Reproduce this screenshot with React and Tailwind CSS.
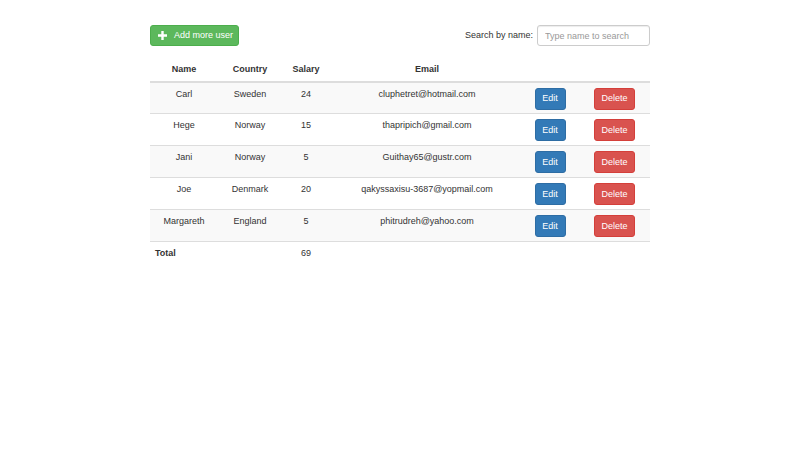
import React from 'react';

const users = [
  { name: 'Carl', country: 'Sweden', salary: 24, email: 'cluphetret@hotmail.com' },
  { name: 'Hege', country: 'Norway', salary: 15, email: 'thapripich@gmail.com' },
  { name: 'Jani', country: 'Norway', salary: 5, email: 'Guithay65@gustr.com' },
  { name: 'Joe', country: 'Denmark', salary: 20, email: 'qakyssaxisu-3687@yopmail.com' },
  { name: 'Margareth', country: 'England', salary: 5, email: 'phitrudreh@yahoo.com' },
];

const App = () => {
  const total = users.reduce((s, u) => s + u.salary, 0);

  return (
    <div className="min-h-screen bg-white text-[#333] text-[9px] leading-[12.5px]" style={{ fontFamily: '"Liberation Sans", Arial, sans-serif' }}>
      <div className="w-[500px] ml-[150px] pt-[25px]">
        {/* Toolbar */}
        <div className="flex items-center justify-between">
          <button className="h-[21px] w-[89px] flex items-center bg-[#5cb85c] border border-[#4cae4c] rounded-[3px] text-white pl-[7px]">
            <svg width="9" height="9" viewBox="0 0 9 9" className="mr-[7px]">
              <path d="M3.3 0h2.4v3.3H9v2.4H5.7V9H3.3V5.7H0V3.3h3.3z" fill="white" />
            </svg>
            <span>Add more user</span>
          </button>
          <div className="flex items-center">
            <span className="mr-[4px]">Search by name:</span>
            <input
              placeholder="Type name to search"
              className="h-[21px] w-[113px] border border-[#ccc] rounded-[3px] px-[7px] text-[9px] placeholder:text-[#999] outline-none shadow-[inset_0_1px_1px_rgba(0,0,0,0.075)]"
            />
          </div>
        </div>

        {/* Table */}
        <table className="w-full table-fixed border-collapse mt-[12px]">
          <colgroup>
            <col className="w-[68px]" />
            <col className="w-[64px]" />
            <col className="w-[48px]" />
            <col className="w-[194px]" />
            <col className="w-[52px]" />
            <col className="w-[74px]" />
          </colgroup>
          <thead>
            <tr className="border-b-2 border-[#ddd]">
              <th className="font-bold text-center px-[5px] pt-[5px] pb-[5px]">Name</th>
              <th className="font-bold text-center px-[5px] pt-[5px] pb-[5px]">Country</th>
              <th className="font-bold text-center px-[5px] pt-[5px] pb-[5px]">Salary</th>
              <th className="font-bold text-center px-[5px] pt-[5px] pb-[5px]">Email</th>
              <th></th>
              <th></th>
            </tr>
          </thead>
          <tbody>
            {users.map((u, i) => (
              <tr key={u.name} className={`border-t border-[#ddd] h-[32px] ${i % 2 === 0 ? 'bg-[#f9f9f9]' : 'bg-white'}`}>
                <td className="text-center align-top px-[5px] pt-[5px]">{u.name}</td>
                <td className="text-center align-top px-[5px] pt-[5px]">{u.country}</td>
                <td className="text-center align-top px-[5px] pt-[5px]">{u.salary}</td>
                <td className="text-center align-top px-[5px] pt-[5px]">{u.email}</td>
                <td className="text-center align-top pt-[5px]">
                  <button className="h-[22px] w-[31px] bg-[#337ab7] border border-[#2e6da4] rounded-[3px] text-white">Edit</button>
                </td>
                <td className="text-left align-top pt-[5px] pl-[18px]">
                  <button className="h-[22px] w-[41px] bg-[#d9534f] border border-[#d43f3a] rounded-[3px] text-white">Delete</button>
                </td>
              </tr>
            ))}
            <tr className="border-t border-[#ddd]">
              <td className="font-bold text-left px-[5px] pt-[5px] pb-[5px]">Total</td>
              <td></td>
              <td className="text-center px-[5px] pt-[5px] pb-[5px]">{total}</td>
              <td></td>
              <td></td>
              <td></td>
            </tr>
          </tbody>
        </table>
      </div>
    </div>
  );
};

export default App;
